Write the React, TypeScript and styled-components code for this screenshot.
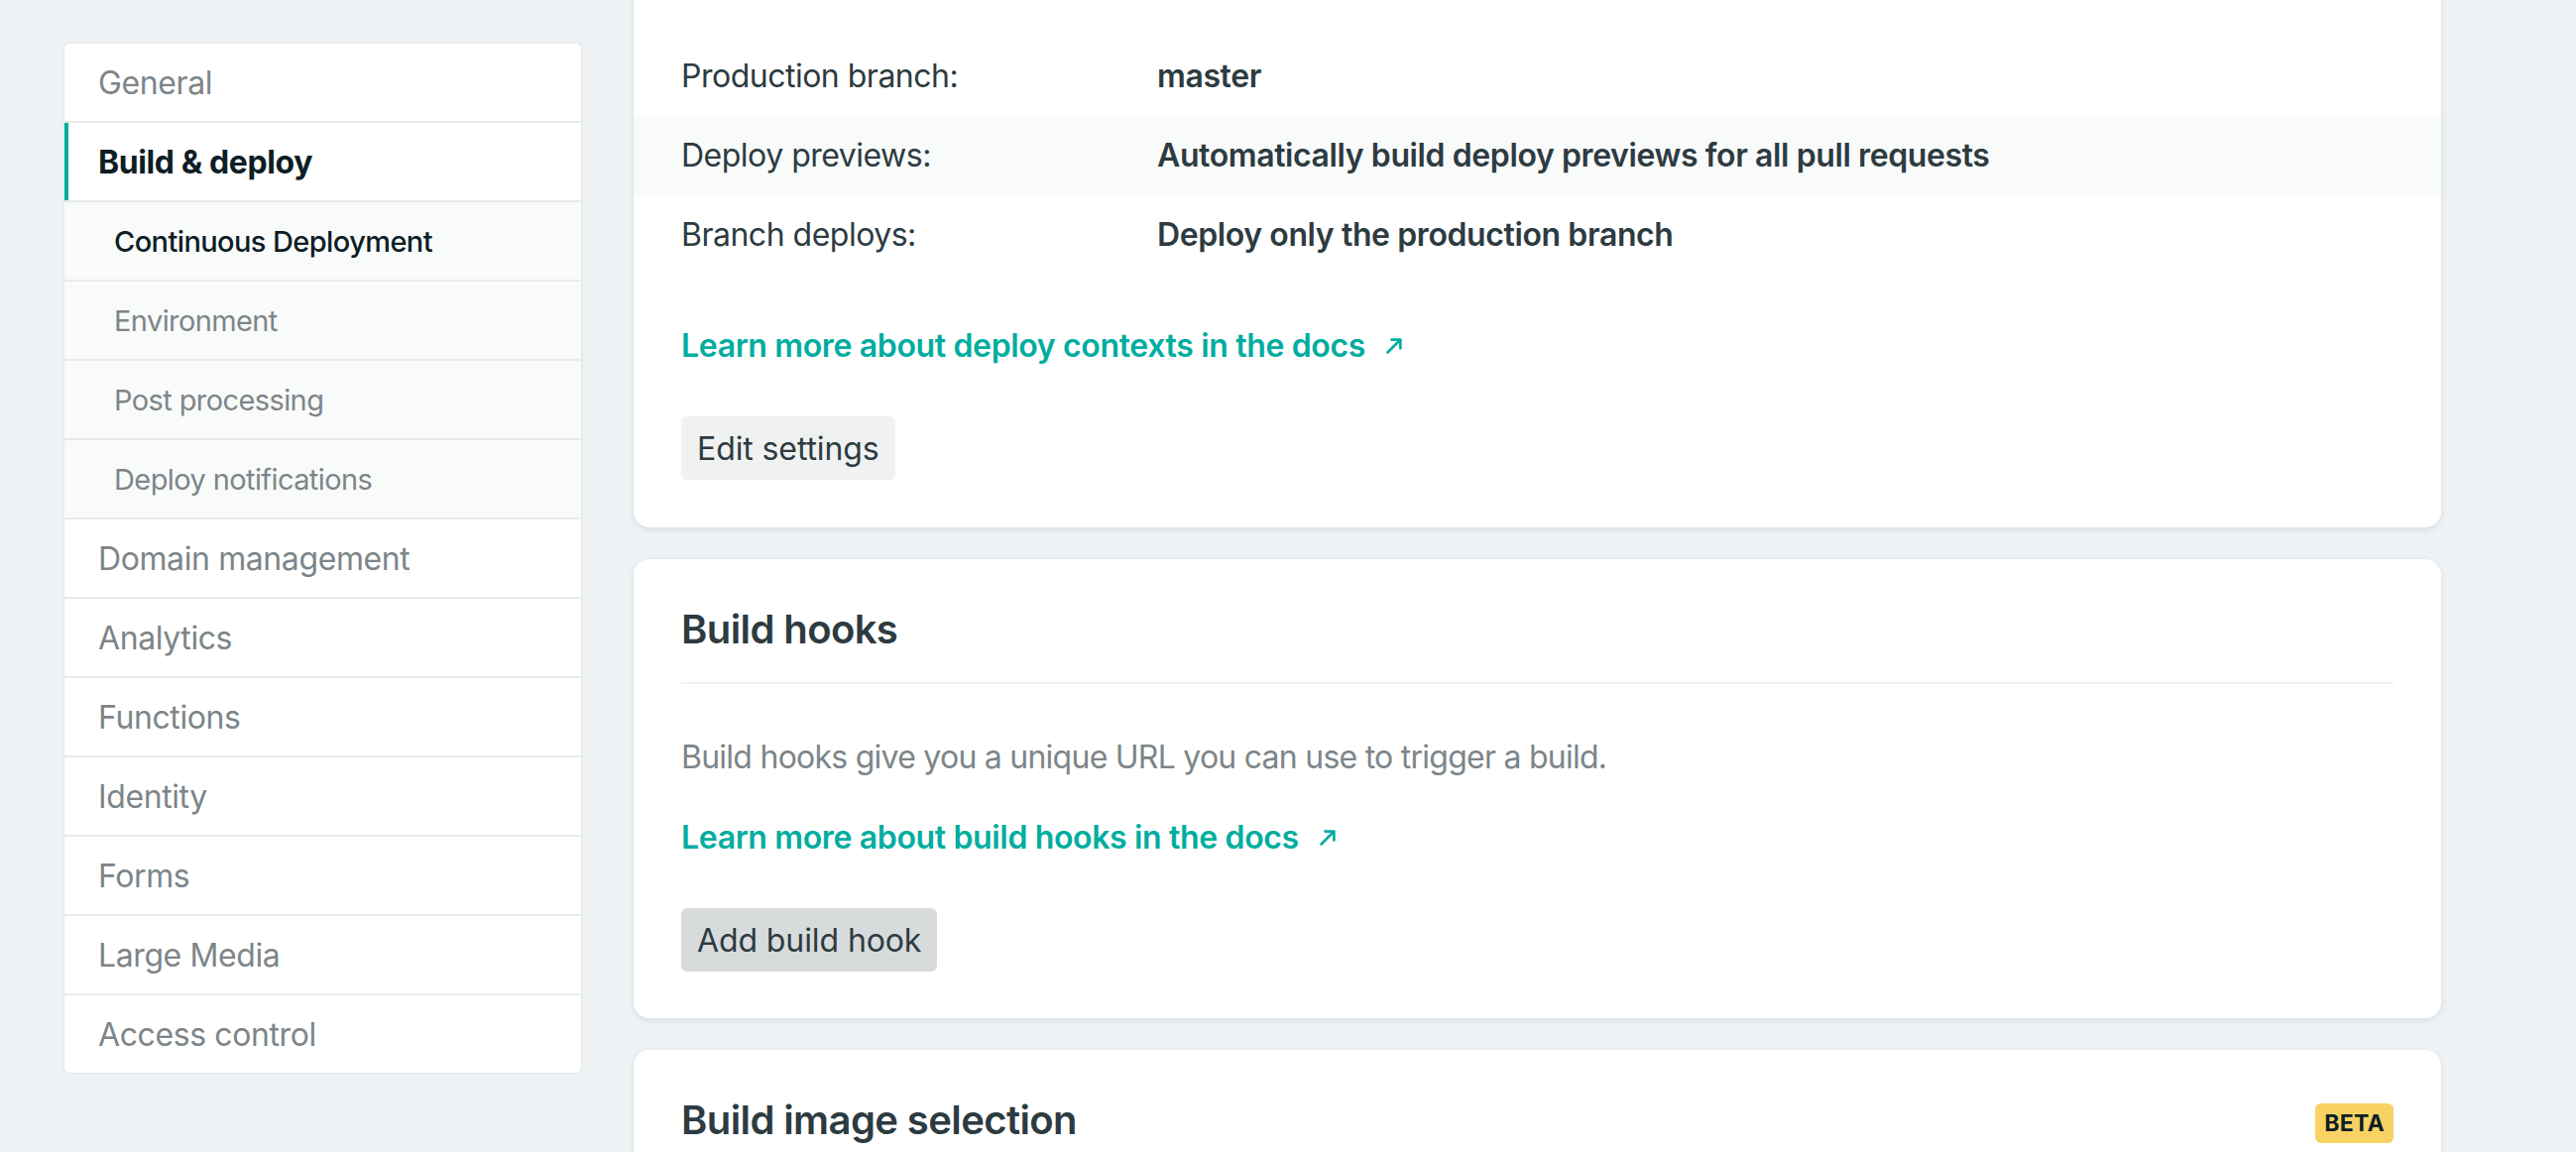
import React from "react";
import styled, { createGlobalStyle } from "styled-components";

const GlobalStyle = createGlobalStyle`
  html, body {
    margin: 0;
    padding: 0;
    background: #eef2f5;
  }
  body {
    font-family: Inter, "Liberation Sans", "Noto Sans", sans-serif;
    color: #2d3b41;
    -webkit-font-smoothing: antialiased;
  }
  * { box-sizing: border-box; }
`;

const Page = styled.div`
  display: flex;
  align-items: flex-start;
  gap: 51px;
  padding-left: 63px;
  height: 1162px;
  overflow: hidden;
`;

const Sidebar = styled.nav`
  flex: 0 0 525px;
  margin-top: 42px;
  background: #fff;
  border: 2px solid #e9ebeb;
  border-radius: 8px;
  overflow: hidden;
  display: flex;
  flex-direction: column;
`;

const NavItem = styled.a<{ $sub?: boolean; $active?: boolean; $current?: boolean }>`
  display: flex;
  align-items: center;
  height: 80px;
  padding-left: ${(p) => (p.$sub ? "50px" : "34px")};
  background: ${(p) => (p.$sub ? "#f9fafa" : "#fff")};
  border-bottom: 2px solid #e9ebeb;
  font-size: ${(p) => (p.$sub ? "29px" : "32px")};
  font-weight: ${(p) => (p.$active ? 700 : p.$current ? 500 : 400)};
  color: ${(p) => (p.$active || p.$current ? "#0e1e25" : "#7d8589")};
  letter-spacing: ${(p) => (p.$sub ? "-0.6px" : "-0.4px")};
  text-decoration: none;
  box-shadow: ${(p) => (p.$active ? "inset 4px 0 0 #00ad9f" : "none")};
  &:last-child {
    border-bottom: none;
    height: 78px;
  }
`;

const Main = styled.main`
  flex: 0 0 1823px;
  display: flex;
  flex-direction: column;
  gap: 32px;
`;

const Card = styled.section<{ $clipped?: boolean }>`
  background: #fff;
  border-radius: 16px;
  box-shadow: 0 2px 6px rgba(14, 30, 37, 0.1);
  padding: ${(p) => (p.$clipped ? "84px 0 48px" : "47px 0 47px")};
  margin-top: ${(p) => (p.$clipped ? "-48px" : "0")};
  display: flex;
  flex-direction: column;
`;

const Row = styled.div<{ $shade?: boolean }>`
  display: grid;
  grid-template-columns: 480px 1fr;
  align-items: center;
  height: 80px;
  padding: 0 48px;
  background: ${(p) => (p.$shade ? "#f9fafa" : "transparent")};
  font-size: 32px;
  letter-spacing: -0.5px;
`;

const Label = styled.span`
  color: #2d3b41;
`;

const Value = styled.span`
  color: #2d3b41;
  font-weight: 600;
  letter-spacing: -0.4px;
`;

const Inner = styled.div<{ $top?: number }>`
  padding: 0 48px;
  margin-top: ${(p) => p.$top ?? 0}px;
`;

const DocLink = styled.a`
  display: inline-flex;
  align-items: center;
  gap: 20px;
  font-size: 32px;
  line-height: 48px;
  font-weight: 600;
  color: #00ad9f;
  text-decoration: none;
  letter-spacing: -0.35px;
`;

const Button = styled.button<{ $pressed?: boolean }>`
  height: 64px;
  padding: 0 16px;
  border: none;
  border-radius: 6px;
  background: ${(p) => (p.$pressed ? "#d8dbdc" : "#f0f1f1")};
  color: #2d3b41;
  font-family: inherit;
  font-size: 32px;
  letter-spacing: -0.1px;
  cursor: pointer;
`;

const HeadRow = styled.div`
  display: flex;
  align-items: center;
  justify-content: space-between;
  padding: 0 48px;
`;

const Heading = styled.h2`
  margin: 0;
  font-size: 40px;
  line-height: 48px;
  font-weight: 600;
  color: #2d3b41;
  letter-spacing: -0.6px;
`;

const Divider = styled.hr`
  margin: 29px 48px 0;
  border: none;
  height: 2px;
  background: #eff1f2;
`;

const Text = styled.p<{ $top?: number }>`
  margin: ${(p) => p.$top ?? 0}px 48px 0;
  font-size: 32px;
  line-height: 48px;
  color: #7d8589;
  letter-spacing: -0.75px;
`;

const Badge = styled.span`
  display: inline-flex;
  align-items: center;
  justify-content: center;
  height: 40px;
  padding: 0 9px;
  margin-top: 6px;
  border-radius: 6px;
  background: #f8d262;
  color: #0e1e25;
  font-size: 23px;
  font-weight: 700;
  letter-spacing: 0.3px;
`;

const Arrow = () => (
  <svg width="18" height="18" viewBox="0 0 18 18" fill="none" aria-hidden="true">
    <path d="M2.5 15.5 L14.5 3.5" stroke="#00ad9f" strokeWidth="2.6" strokeLinecap="round" />
    <path d="M6.5 2.6 H15.4 V11.5" stroke="#00ad9f" strokeWidth="2.6" strokeLinecap="round" strokeLinejoin="round" />
  </svg>
);

const navItems: { label: string; sub?: boolean; active?: boolean; current?: boolean }[] = [
  { label: "General" },
  { label: "Build & deploy", active: true },
  { label: "Continuous Deployment", sub: true, current: true },
  { label: "Environment", sub: true },
  { label: "Post processing", sub: true },
  { label: "Deploy notifications", sub: true },
  { label: "Domain management" },
  { label: "Analytics" },
  { label: "Functions" },
  { label: "Identity" },
  { label: "Forms" },
  { label: "Large Media" },
  { label: "Access control" },
];

export default function App() {
  return (
    <>
      <GlobalStyle />
      <Page>
        <Sidebar>
          {navItems.map((n) => (
            <NavItem key={n.label} href="#" $sub={n.sub} $active={n.active} $current={n.current}>
              {n.label}
            </NavItem>
          ))}
        </Sidebar>
        <Main>
          <Card $clipped>
            <Row>
              <Label>Production branch:</Label>
              <Value>master</Value>
            </Row>
            <Row $shade>
              <Label>Deploy previews:</Label>
              <Value>Automatically build deploy previews for all pull requests</Value>
            </Row>
            <Row>
              <Label>Branch deploys:</Label>
              <Value>Deploy only the production branch</Value>
            </Row>
            <Inner $top={49}>
              <DocLink href="#">
                Learn more about deploy contexts in the docs <Arrow />
              </DocLink>
            </Inner>
            <Inner $top={47}>
              <Button>Edit settings</Button>
            </Inner>
          </Card>
          <Card>
            <HeadRow>
              <Heading>Build hooks</Heading>
            </HeadRow>
            <Divider />
            <Text $top={50}>Build hooks give you a unique URL you can use to trigger a build.</Text>
            <Inner $top={33}>
              <DocLink href="#">
                Learn more about build hooks in the docs <Arrow />
              </DocLink>
            </Inner>
            <Inner $top={47}>
              <Button $pressed>Add build hook</Button>
            </Inner>
          </Card>
          <Card>
            <HeadRow>
              <Heading>Build image selection</Heading>
              <Badge>BETA</Badge>
            </HeadRow>
          </Card>
        </Main>
      </Page>
    </>
  );
}
